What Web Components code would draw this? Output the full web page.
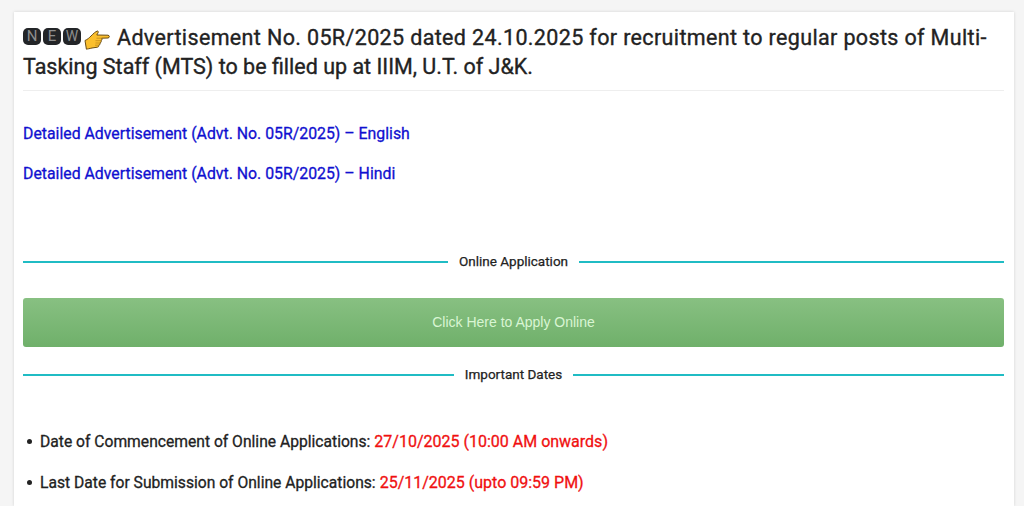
<!DOCTYPE html>
<html lang="en">
<head>
<meta charset="utf-8">
<title>Advertisement No. 05R/2025</title>
<style>
  html, body { margin: 0; height: 506px; overflow: hidden; background: #f5f5f5; }
  body { font-family: Roboto, "Liberation Sans", sans-serif; color: #222; }
</style>
</head>
<body>
<notice-card>
  <notice-title>
    <span slot="first">Advertisement No. 05R/2025 dated 24.10.2025 for recruitment to regular posts of Multi-</span>
    Tasking Staff (MTS) to be filled up at IIIM, U.T. of J&amp;K.
  </notice-title>
  <notice-links>
    <a href="#">Detailed Advertisement (Advt. No. 05R/2025) – English</a>
    <a href="#">Detailed Advertisement (Advt. No. 05R/2025) – Hindi</a>
  </notice-links>
  <line-divider style="margin-top: 67px">Online Application</line-divider>
  <apply-button style="margin-top: 26px">Click Here to Apply Online</apply-button>
  <line-divider style="margin-top: 18px">Important Dates</line-divider>
  <date-list>
    <date-item label="Date of Commencement of Online Applications:">27/10/2025 (10:00 AM onwards)</date-item>
    <date-item label="Last Date for Submission of Online Applications:">25/11/2025 (upto 09:59 PM)</date-item>
  </date-list>
</notice-card>

<script>
class NoticeCard extends HTMLElement {
    constructor() {
        super();
        this.attachShadow({ mode: "open" }).innerHTML = `
            <style>
                :host {
                    display: block;
                    box-sizing: border-box;
                    width: 1000px;
                    height: 494px;
                    margin: 12px 0 0 14px;
                    padding: 11px 10px 0 9px;
                    background: #fff;
                    box-shadow: 0 0 3px rgba(0, 0, 0, 0.14);
                }
            </style>
            <slot></slot>
        `;
    }
}

class NoticeTitle extends HTMLElement {
    constructor() {
        super();
        this.attachShadow({ mode: "open" }).innerHTML = `
            <style>
                :host {
                    display: block;
                    padding-bottom: 9px;
                    border-bottom: 1px solid #eee;
                    font-size: 21.5px;
                    line-height: 29px;
                    color: #222;
                    -webkit-text-stroke: 0.35px #222;
                }
                .row { display: flex; align-items: center; white-space: nowrap; }
                .row ::slotted(span) { letter-spacing: 0.36px; }
                .badge {
                    flex: none;
                    width: 18px;
                    height: 17px;
                    margin: 0 2px 2px 0;
                    border-radius: 5px;
                    background: #232528;
                    color: #8e8e8e;
                    font-size: 15px;
                    line-height: 17px;
                    text-align: center;
                    -webkit-text-stroke: 0;
                }
                .badge.w { font-size: 14px; }
                svg { flex: none; margin: 5px 7px 0 1px; }
            </style>
            <div class="row">
                <span class="badge">N</span><span class="badge">E</span><span class="badge w">W</span>
                <svg width="26" height="20" viewBox="0 0 26 20">
                    <path d="M1 10.5 C3.5 9.5 5.5 7.5 7 6 C9.5 3.5 11.5 1.5 13.5 1 C14.5 1 14.5 2.5 13.5 3.8 L12.8 5 L24 5.2 C25.8 5.4 25.8 7.8 24 8 L17.6 8.2 C18.4 9 18 10.4 17 10.6 C17.6 11.4 17 12.8 16 12.9 C16.4 13.8 15.8 15 14.8 15.1 C15 16.2 14.4 17.2 13.4 17.2 L8 18 C5.5 18.6 3.5 19 2.4 19.2 Z"
                        fill="#fbbf2d" stroke="#6a4c12" stroke-width="1" stroke-linejoin="round"/>
                    <path d="M12.5 8.2 H17.6 M11.5 10.7 H17 M11.5 13 H16 M11 15.2 H14.8" fill="none" stroke="#c08a1c" stroke-width="0.8"/>
                </svg>
                <slot name="first"></slot>
            </div>
            <slot></slot>
        `;
    }
}

class NoticeLinks extends HTMLElement {
    constructor() {
        super();
        this.attachShadow({ mode: "open" }).innerHTML = `
            <style>
                :host {
                    display: flex;
                    flex-direction: column;
                    gap: 18px;
                    margin-top: 32px;
                    font-size: 15.83px;
                    line-height: 22px;
                }
                ::slotted(a) { color: #1010d0; text-decoration: none; -webkit-text-stroke: 0.3px #1010d0; }
            </style>
            <slot></slot>
        `;
    }
}

class LineDivider extends HTMLElement {
    constructor() {
        super();
        this.attachShadow({ mode: "open" }).innerHTML = `
            <style>
                :host {
                    display: flex;
                    align-items: center;
                    gap: 11px;
                    height: 20px;
                    font-size: 13.5px;
                    color: #222;
                    -webkit-text-stroke: 0.25px #222;
                }
                span { padding-bottom: 2px; }
                i { flex: 1; height: 2px; background: #20bcc4; }
            </style>
            <i></i><span><slot></slot></span><i></i>
        `;
    }
}

class ApplyButton extends HTMLElement {
    constructor() {
        super();
        this.attachShadow({ mode: "open" }).innerHTML = `
            <style>
                :host {
                    display: flex;
                    align-items: center;
                    justify-content: center;
                    box-sizing: border-box;
                    height: 49px;
                    padding-bottom: 2px;
                    border-radius: 3px;
                    background: linear-gradient(#88c082, #6fb06a);
                    color: #d9f5d3;
                    font-family: "Liberation Sans", Arial, sans-serif;
                    font-size: 14px;
                }
            </style>
            <slot></slot>
        `;
    }
}

class DateList extends HTMLElement {
    constructor() {
        super();
        this.attachShadow({ mode: "open" }).innerHTML = `
            <style>
                :host {
                    display: flex;
                    flex-direction: column;
                    gap: 19px;
                    margin-top: 45px;
                }
            </style>
            <slot></slot>
        `;
    }
}

class DateItem extends HTMLElement {
    constructor() {
        super();
        this.attachShadow({ mode: "open" }).innerHTML = `
            <style>
                :host {
                    display: flex;
                    align-items: center;
                    height: 22px;
                    padding-left: 4px;
                    font-size: 15.65px;
                    color: #222;
                    -webkit-text-stroke: 0.3px currentColor;
                }
                .dot { width: 5px; height: 5px; margin-right: 8px; border-radius: 50%; background: #222; }
                .value { margin-left: 4px; font-size: 16px; color: #f01010; }
            </style>
            <span class="dot"></span>
            <span class="label"></span>
            <span class="value"><slot></slot></span>
        `;
        this.shadowRoot.querySelector(".label").textContent = this.getAttribute("label");
    }
}

customElements.define("notice-card", NoticeCard);
customElements.define("notice-title", NoticeTitle);
customElements.define("notice-links", NoticeLinks);
customElements.define("line-divider", LineDivider);
customElements.define("apply-button", ApplyButton);
customElements.define("date-list", DateList);
customElements.define("date-item", DateItem);
</script>
</body>
</html>
